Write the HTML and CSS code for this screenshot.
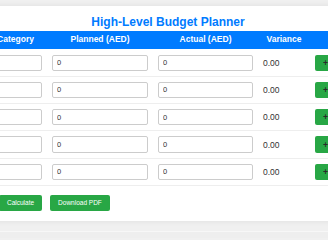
FILE: index.html
```html
<!DOCTYPE html>
<html lang="en">
<head>
  <meta charset="UTF-8">
  <title>High-Level Budget Planner</title>
  <link rel="stylesheet" href="styles.css">
</head>
<body>
  <div class="card">
    <h1>High-Level Budget Planner</h1>
    <table class="budget">
      <colgroup>
        <col class="c-cat">
        <col class="c-plan">
        <col class="c-act">
        <col class="c-var">
        <col class="c-add">
      </colgroup>
      <thead>
        <tr>
          <th>Category</th>
          <th>Planned (AED)</th>
          <th>Actual (AED)</th>
          <th>Variance</th>
          <th></th>
        </tr>
      </thead>
      <tbody>
        <tr>
          <td><input type="text" value=""></td>
          <td><input type="text" value="0"></td>
          <td><input type="text" value="0"></td>
          <td class="variance">0.00</td>
          <td><button class="add-btn"><span>+</span> Add</button></td>
        </tr>
        <tr>
          <td><input type="text" value=""></td>
          <td><input type="text" value="0"></td>
          <td><input type="text" value="0"></td>
          <td class="variance">0.00</td>
          <td><button class="add-btn"><span>+</span> Add</button></td>
        </tr>
        <tr>
          <td><input type="text" value=""></td>
          <td><input type="text" value="0"></td>
          <td><input type="text" value="0"></td>
          <td class="variance">0.00</td>
          <td><button class="add-btn"><span>+</span> Add</button></td>
        </tr>
        <tr>
          <td><input type="text" value=""></td>
          <td><input type="text" value="0"></td>
          <td><input type="text" value="0"></td>
          <td class="variance">0.00</td>
          <td><button class="add-btn"><span>+</span> Add</button></td>
        </tr>
        <tr>
          <td><input type="text" value=""></td>
          <td><input type="text" value="0"></td>
          <td><input type="text" value="0"></td>
          <td class="variance">0.00</td>
          <td><button class="add-btn"><span>+</span> Add</button></td>
        </tr>
      </tbody>
    </table>
    <div class="actions">
      <button class="btn">Calculate</button>
      <button class="btn">Download PDF</button>
    </div>
  </div>
  <div class="page-end"></div>
</body>
</html>
```

FILE: styles.css
```css
:root {
  --blue: #007bff;
  --green: #28a745;
  --text: #333;
}

html, body {
  overflow: hidden;
}
body {
  margin: 0;
  padding-top: 6px;
  font-family: 'Liberation Sans', Arial, sans-serif;
  background: #f0f0f0;
  color: var(--text);
}
.card {
  width: 368px;
  margin-left: -16px;
  padding: 9px 0 10px;
  background: white;
  box-shadow: 0 0 6px rgba(0,0,0,0.08);
}
h1 {
  margin: 0 0 2px;
  font-size: 12px;
  line-height: 14px;
  text-align: center;
  color: var(--blue);
}
.budget {
  width: 368px;
  table-layout: fixed;
  border-collapse: collapse;
}
.c-cat { width: 63px; }
.c-plan { width: 106px; }
.c-act { width: 105px; }
.c-var { width: 52px; }
.c-add { width: 42px; }
.budget th {
  background: var(--blue);
  color: white;
  font-size: 8.5px;
  line-height: 9px;
  padding: 4px 5px 4.5px;
  text-align: center;
}
.budget td {
  padding: 6px 5px 5px;
  border-bottom: 1px solid #eee;
  vertical-align: middle;
}
.budget tbody tr + tr td {
  padding-top: 5px;
}
.budget input {
  width: 100%;
  height: 16.3px;
  box-sizing: border-box;
  border: 1px solid #ccc;
  border-radius: 2px;
  padding: 0 4px;
  font-family: 'Liberation Sans', Arial, sans-serif;
  font-size: 7.5px;
  color: var(--text);
  display: block;
}
.variance {
  font-size: 8.5px;
  color: var(--text);
}
.add-btn {
  display: block;
  height: 16.3px;
  width: 60px;
  padding: 0 0 0 8px;
  border: none;
  border-radius: 2px;
  background: var(--green);
  color: white;
  font-family: 'Liberation Sans', Arial, sans-serif;
  font-size: 8.5px;
  text-align: left;
  white-space: nowrap;
}
.add-btn span {
  color: #2a2a2a;
  font-weight: bold;
}
.actions {
  display: flex;
  gap: 8px;
  margin-top: 9px;
  padding-left: 15px;
}
.btn {
  height: 16px;
  padding: 0 8px;
  border: none;
  border-radius: 2px;
  background: var(--green);
  color: white;
  font-family: 'Liberation Sans', Arial, sans-serif;
  font-size: 6.5px;
}
.page-end {
  margin-top: 10px;
  height: 6px;
  border-top: 1px solid #f7f7f7;
  background: #eeeeee;
}
```
